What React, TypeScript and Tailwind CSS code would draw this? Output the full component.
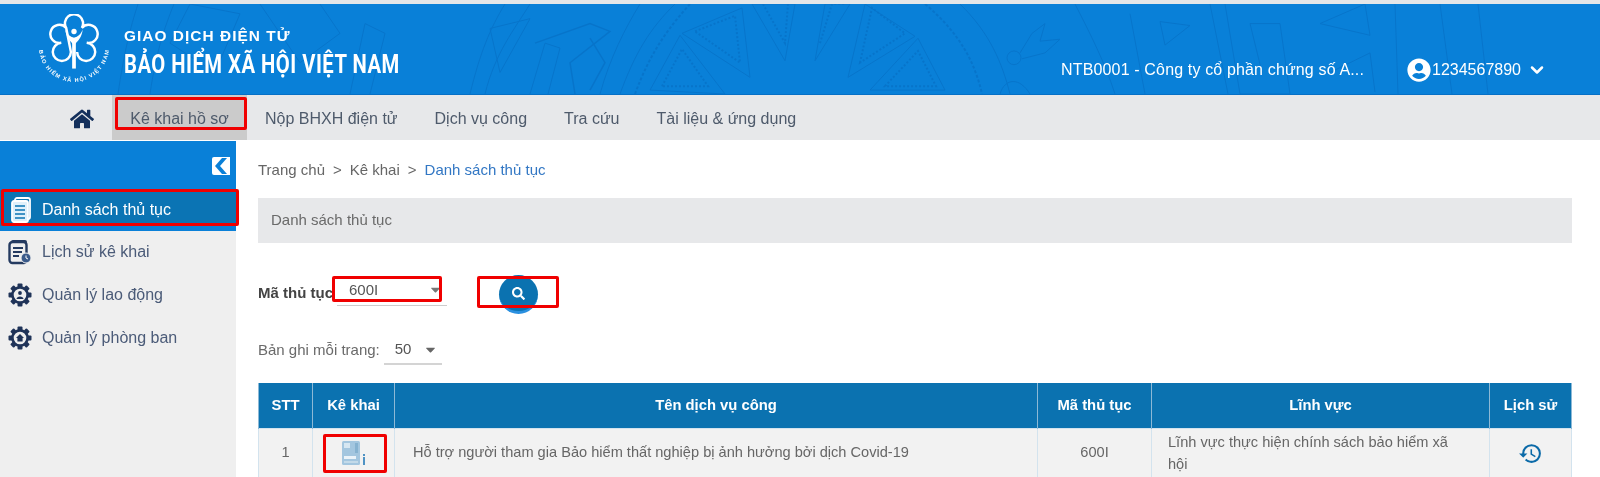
import React from "react";
import { FaHome, FaUserCircle, FaSearch, FaCaretDown } from "react-icons/fa";
import { MdHistory } from "react-icons/md";
import { ChevronDown } from "lucide-react";

function RedBox({ className }: { className: string }) {
  return <div className={`absolute border-[3px] border-[#f00000] rounded-[2px] pointer-events-none ${className}`} />;
}

function Logo() {
  return (
    <svg width="70" height="70" viewBox="0 0 68 68" className="shrink-0">
      <path
        d="M26.4 13.5 A8.8 8.8 0 1 1 41.6 13.5 A8.8 8.8 0 1 1 46.4 28 A8.8 8.8 0 1 1 37 37 M31 37 A8.8 8.8 0 1 1 21.6 28 A8.8 8.8 0 1 1 26.4 13.5 Z"
        fill="none"
        stroke="#fff"
        strokeWidth="2.4"
      />
      <circle cx="34" cy="17" r="2.6" fill="#fff" />
      <path d="M25.5 15 C26.5 23 30 26 34 30 C38 26 41.5 23 42.5 15 C40 21 37 22 34 23 C31 22 28 21 25.5 15 Z" fill="#fff" />
      <rect x="32.2" y="27" width="3.6" height="26" fill="#fff" />
      <defs>
        <path id="logoArc" d="M0 32 A34 34 0 0 0 68 32" />
      </defs>
      <text fontSize="5.4" fontWeight="700" fill="#fff" fontFamily="'Liberation Sans', sans-serif">
        <textPath href="#logoArc" startOffset="50%" textAnchor="middle" textLength="100">
          BẢO HIỂM XÃ HỘI VIỆT NAM
        </textPath>
      </text>
    </svg>
  );
}

function Pattern() {
  return (
    <svg className="absolute inset-0 w-full h-full" viewBox="0 0 1600 92" preserveAspectRatio="none" fill="none" stroke="#0669bd" strokeWidth="1" opacity="0.5">
      <path d="M118 92 C124 50 130 25 138 0" />
      <path d="M150 92 C156 50 164 25 174 0" />
      <path d="M190 0 L170 40 L215 70 L240 10 Z" />
      <path d="M260 0 L300 60 L340 30 L320 0" />
      <path d="M350 92 L365 20 L385 30 L370 92" />
      <path d="M470 92 C480 50 490 25 505 0" />
      <path d="M485 92 C495 50 515 25 530 0" />
      <path d="M490 25 L530 15 L500 70 Z" />
      <path d="M600 92 C610 55 625 25 640 0" />
      <path d="M530 92 L545 40 L560 45 L548 92" />
      <path d="M535 40 L590 20 L610 28 L570 60 L575 92" strokeWidth="1.5" />
      <path d="M590 35 L605 60 L590 88" strokeWidth="1.5" />
      <path d="M620 92 C635 50 650 25 675 0" />
      <path d="M635 92 C650 50 668 25 690 0" strokeDasharray="3 2" strokeWidth="2" />
      {[
        "650,88 680,32 725,92",
        "682,30 742,4 750,75",
        "752,0 785,58 795,0",
        "815,58 825,0 850,0",
        "848,75 865,0 915,33",
        "870,88 918,35 945,88",
      ].map((p) => (
        <polygon key={p} points={p} />
      ))}
      <path d="M662 84 L682 46 L708 84 Z" strokeDasharray="2 2" strokeWidth="2" />
      <path d="M695 28 L735 12 L740 60 Z" strokeDasharray="2 2" strokeWidth="2" />
      <path d="M763 0 L785 40 L788 0" strokeDasharray="2 2" strokeWidth="2" />
      <path d="M820 40 L832 0 L845 0" strokeDasharray="2 2" strokeWidth="2" />
      <path d="M860 60 L872 4 L905 30 Z" strokeDasharray="2 2" strokeWidth="2" />
      <path d="M885 84 L918 48 L936 84 Z" strokeDasharray="2 2" strokeWidth="2" />
      <path d="M925 0 C960 30 975 60 982 92" strokeDasharray="3 2" strokeWidth="2" />
      <path d="M960 0 C990 30 1002 60 1010 92" />
      <circle cx="1014" cy="55" r="7" />
      <path d="M1020 50 L1032 30 L1045 20 L1040 38 L1060 36 L1045 50 L1022 56" />
      <path d="M1000 92 C1005 75 1020 75 1030 92" />
      <path d="M1075 0 C1090 30 1105 60 1115 92" />
      <path d="M1160 18 L1190 22 L1165 42 Z" />
      <path d="M1130 10 L1145 92" />
      <path d="M1225 0 L1240 92 L1290 92 L1280 20 L1250 20 L1262 70" />
      <path d="M1210 0 L1228 92" />
      <path d="M1320 20 L1365 0 L1370 32 Z" />
      <path d="M1330 70 L1370 50 L1375 90" />
      <path d="M1395 0 L1398 92" />
      <path d="M1440 0 L1452 92" />
      <path d="M1478 0 L1488 92" />
    </svg>
  );
}

function DocIcon() {
  return (
    <svg width="22" height="26" viewBox="0 0 22 26" fill="none" stroke="#fff" strokeWidth="1.8">
      <rect x="5" y="1" width="15" height="21" rx="2" fill="#0b74b4" />
      <rect x="2" y="4" width="16" height="21" rx="2" fill="#dff0fa" stroke="#fff" />
      <path d="M5 9h10M5 13h10M5 17h10M5 21h10" stroke="#0b74b4" strokeWidth="1.4" />
    </svg>
  );
}

function HistoryDocIcon() {
  return (
    <svg width="24" height="26" viewBox="0 0 24 26" fill="none">
      <rect x="3" y="1" width="16" height="4" rx="2" fill="#243a60" />
      <rect x="1.5" y="3" width="17" height="21" rx="3" fill="#efefef" stroke="#243a60" strokeWidth="2.4" />
      <path d="M5 9h10M5 13h9M5 17h6" stroke="#243a60" strokeWidth="1.8" />
      <circle cx="18" cy="19" r="5" fill="#3a5a8a" stroke="#efefef" />
      <path d="M18 16.5V19l2 1" stroke="#fff" strokeWidth="1" />
    </svg>
  );
}

function GearIcon({ house }: { house?: boolean }) {
  const teeth = [0, 45, 90, 135, 180, 225, 270, 315];
  return (
    <svg width="24" height="24" viewBox="0 0 24 24" fill="none">
      {teeth.map((a) => (
        <rect key={a} x="9.5" y="0.5" width="5" height="5" rx="1" fill="#1f3358" transform={`rotate(${a} 12 12)`} />
      ))}
      <circle cx="12" cy="12" r="7.6" fill="#efefef" stroke="#1f3358" strokeWidth="2.6" />
      {house ? (
        <path d="M12 8 L16 12 H14.6 V15.5 H9.4 V12 H8 Z" fill="#1f3358" />
      ) : (
        <g fill="#1f3358">
          <circle cx="12" cy="10" r="1.9" />
          <path d="M8.5 16 C8.5 12.5 15.5 12.5 15.5 16 Z" />
        </g>
      )}
    </svg>
  );
}

function CollapseIcon() {
  return (
    <svg width="18" height="18" viewBox="0 0 18 18">
      <path d="M2 0 H18 V18 H2 Q0 18 0 16 V2 Q0 0 2 0 Z" fill="#fff" />
      <path d="M10 1 L3 9 L10 17 H15 L8 9 L15 1 Z" fill="#0980d8" />
    </svg>
  );
}

function FormIcon() {
  return (
    <svg width="26" height="26" viewBox="0 0 26 26">
      <rect x="1" y="1" width="18" height="24" rx="1.5" fill="#a3c6df" />
      <rect x="3" y="3" width="6" height="5" fill="#d6e7f2" />
      <rect x="14" y="3" width="3" height="10" fill="#86b2d0" />
      <rect x="3" y="16" width="12" height="3" fill="#eaf3f9" />
      <rect x="3" y="21" width="14" height="2" fill="#c3dae9" />
      <rect x="22" y="14" width="2" height="2" fill="#4f93c4" />
      <rect x="22" y="17" width="2" height="8" fill="#4f93c4" />
    </svg>
  );
}

export default function App() {
  const sideItem = "flex items-center h-[42px] pl-[8px] gap-[10px] text-[#4b5b78]";
  const th = "border-x border-[#8db9d6] font-bold text-white text-center text-[14.8px]";
  const td = "border border-[#d3e3ee] text-center align-middle";
  return (
    <div className="h-[477px] w-[1600px] overflow-hidden bg-white blur-[0.45px] text-[15px] text-[#5b5b5b] font-['Liberation_Sans',Arial,sans-serif]">
      <div className="h-[4px] bg-[#e4e6e8]" />
      <header className="relative h-[91px] bg-[#0980d8] border-b border-[#0670c6] flex items-center overflow-hidden">
        <Pattern />
        <div className="relative flex items-center pl-[39px] w-full">
          <Logo />
          <div className="ml-[15px] mt-[8px] text-white">
            <div className="text-[15.4px] font-bold tracking-[1.05px] leading-[20px]">GIAO DỊCH ĐIỆN TỬ</div>
            <div className="mt-[4px] text-[25px] font-bold leading-[30px] tracking-[0.6px] origin-left scale-x-[0.81] whitespace-nowrap font-['Roboto',sans-serif]">BẢO HIỂM XÃ HỘI VIỆT NAM</div>
          </div>
          <div className="ml-auto mr-[53px] mt-[41px] flex items-center text-white text-[16px]">
            <span className="tracking-[0.15px]">NTB0001 - Công ty cổ phần chứng số A...</span>
            <FaUserCircle className="ml-[43px] text-[24px]" />
            <span className="ml-[1px]">1234567890</span>
            <ChevronDown className="ml-[6px] w-[20px] h-[20px]" strokeWidth={3} />
          </div>
        </div>
      </header>
      <nav className="h-[45px] bg-[#e7e8ea] flex items-stretch text-[16px] text-[#4e5a6b]">
        <div className="w-[112px] flex items-center justify-end pr-[18px] pt-[2px]">
          <FaHome className="text-[24px] text-[#14305c]" />
        </div>
        <div className="relative w-[135px] bg-[#cbcbcb] flex items-center justify-center pt-[2px]">
          Kê khai hồ sơ
          <RedBox className="left-[3px] right-0 top-[2px] bottom-[10px]" />
        </div>
        <div className="flex items-center gap-[37px] pl-[18px] pt-[2px]">
          <span>Nộp BHXH điện tử</span>
          <span>Dịch vụ công</span>
          <span>Tra cứu</span>
          <span>Tài liệu &amp; ứng dụng</span>
        </div>
      </nav>
      <div className="flex mt-[1px] h-[336px]">
        <aside className="w-[236px] bg-[#efefef] shrink-0 text-[16px]">
          <div className="h-[90px] bg-[#0980d8] relative">
            <div className="h-[49px] flex items-center justify-end pr-[6px]">
              <CollapseIcon />
            </div>
            <div className="relative h-[36px] bg-[#0b74b4] flex items-center pl-[10px] gap-[10px] text-white pt-[3px]">
              <DocIcon />
              Danh sách thủ tục
              <RedBox className="left-[1px] -right-[3px] -top-[1px] bottom-0" />
            </div>
          </div>
          <div>
            <div className={sideItem}><HistoryDocIcon />Lịch sử kê khai</div>
            <div className={`${sideItem} pt-[1px]`}><GearIcon />Quản lý lao động</div>
            <div className={`${sideItem} pt-[3px]`}><GearIcon house />Quản lý phòng ban</div>
          </div>
        </aside>
        <main className="flex-1 pl-[22px] pr-[28px] min-w-0">
          <div className="h-[57px] flex items-center pt-[2px] text-[#666] gap-[8px]">
            <span>Trang chủ</span><span>&gt;</span><span>Kê khai</span><span>&gt;</span>
            <span className="text-[#3277c4]">Danh sách thủ tục</span>
          </div>
          <div className="h-[45px] bg-[#e7e8ea] flex items-center pl-[13px] text-[#6a6a6a]">Danh sách thủ tục</div>
          <div className="relative h-[38px] mt-[33px] flex items-start">
            <span className="font-bold text-[#444] w-[80px] mt-[6px] whitespace-nowrap">Mã thủ tục</span>
            <div className="relative w-[110px] ml-[-1px] h-[30px] border-b border-[#ccc] flex items-start pt-[3px] pl-[12px] text-[#555]">
              600I
              <FaCaretDown className="absolute right-[4px] top-[6px] text-[#777]" />
              <RedBox className="-left-[5px] right-[5px] top-0 bottom-[3px]" />
            </div>
            <div className="relative w-[82px] h-[39px] ml-[30px] flex justify-center">
              <div className="w-[39px] h-[39px] -mt-[1px] rounded-full bg-[#0b72b0] border-b-[3px] border-[#2a90e0] flex items-center justify-center">
                <FaSearch className="text-white text-[13px]" />
              </div>
              <RedBox className="left-0 right-0 top-0 bottom-[7px]" />
            </div>
          </div>
          <div className="h-[46px] mt-[13px] flex items-center text-[#6a6a6a]">
            <span>Bản ghi mỗi trang:</span>
            <div className="relative ml-[4px] w-[58px] h-[30px] border-b-2 border-[#d4d4d4] flex items-center pl-[11px] text-[#555]">
              50
              <FaCaretDown className="absolute right-[4px] top-[7px] text-[#666]" />
            </div>
          </div>
          <table className="mt-[10px] w-[1313px] table-fixed border-collapse text-[14.6px]">
            <colgroup>
              <col className="w-[54px]" /><col className="w-[82px]" /><col className="w-[643px]" />
              <col className="w-[114px]" /><col className="w-[338px]" /><col className="w-[82px]" />
            </colgroup>
            <thead>
              <tr className="h-[45px] bg-[#0b72b0]">
                <th className={th}>STT</th><th className={th}>Kê khai</th><th className={th}>Tên dịch vụ công</th>
                <th className={th}>Mã thủ tục</th><th className={th}>Lĩnh vực</th><th className={th}>Lịch sử</th>
              </tr>
            </thead>
            <tbody>
              <tr className="h-[50px] bg-[#f2f2f2] text-[#666]">
                <td className={td}>1</td>
                <td className={td}>
                  <div className="relative h-[44px] flex items-center justify-center">
                    <FormIcon />
                    <RedBox className="left-[10px] right-[7px] top-[3px] bottom-[2px]" />
                  </div>
                </td>
                <td className={`${td} text-left pl-[18px]`}>Hỗ trợ người tham gia Bảo hiểm thất nghiệp bị ảnh hưởng bởi dịch Covid-19</td>
                <td className={td}>600I</td>
                <td className={`${td} text-left pl-[16px] pr-[20px] leading-[22px]`}>Lĩnh vực thực hiện chính sách bảo hiểm xã hội</td>
                <td className={td}><MdHistory className="inline text-[25px] text-[#0b6aa8]" /></td>
              </tr>
            </tbody>
          </table>
        </main>
      </div>
    </div>
  );
}
